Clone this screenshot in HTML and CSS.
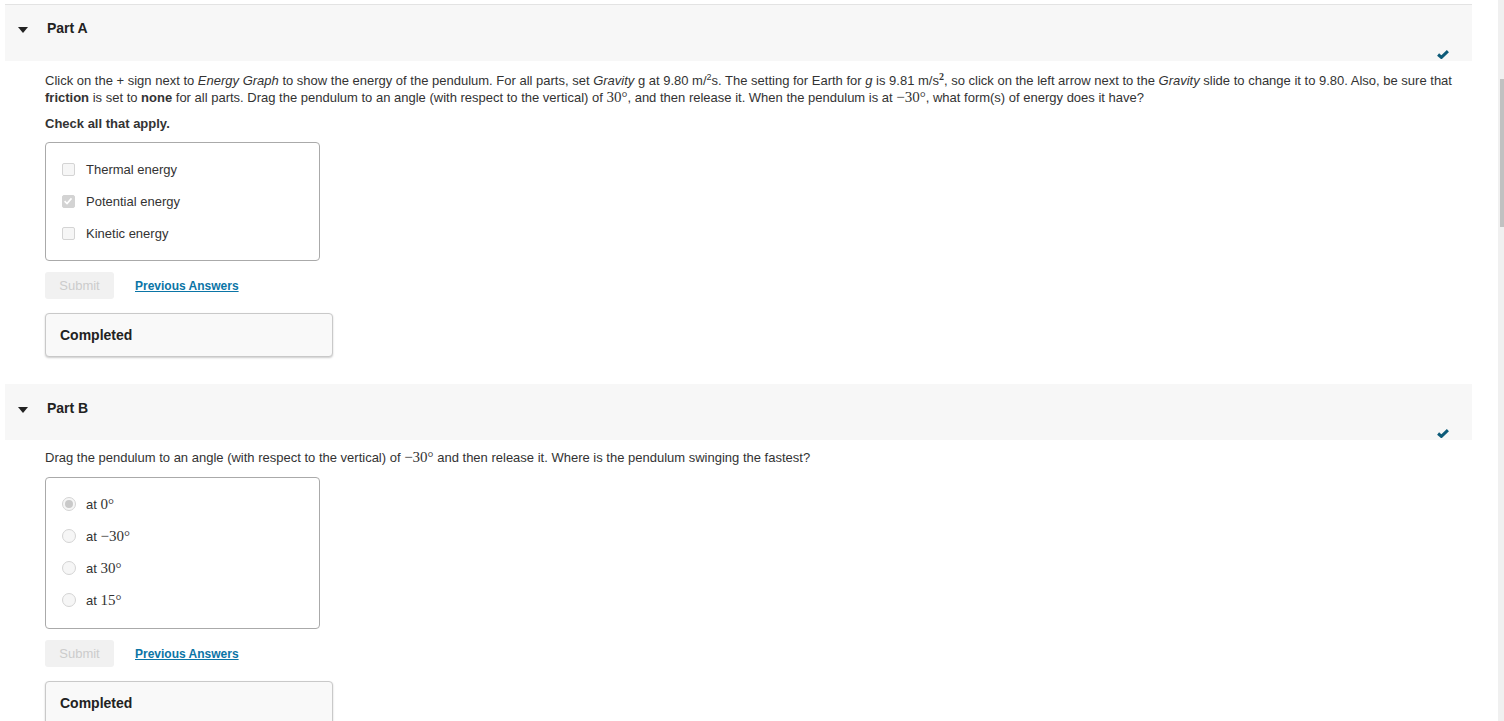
FILE: index.html
```html
<!DOCTYPE html>
<html>
<head>
<meta charset="utf-8">
<link rel="stylesheet" href="styles.css">
</head>
<body>
<div class="page">
  <section class="part">
    <div class="part-header">
      <span class="caret"></span>
      <span class="part-title">Part A</span>
      <svg class="done" width="12" height="9" viewBox="0 0 12 9"><path d="M1.1 4.5 L4.4 7.4 L10.9 1.1" fill="none" stroke="#0d5b79" stroke-width="3"/></svg>
    </div>
    <div class="part-body">
      <p class="prompt">Click on the + sign next to <i>Energy Graph</i> to show the energy of the pendulum. For all parts, set <i>Gravity</i> g at 9.80 m/<sup>2</sup>s. The setting for Earth for <i>g</i> is 9.81 m/s<sup class="msup">2</sup>, so click on the left arrow next to the <i>Gravity</i> slide to change it to 9.80. Also, be sure that <b>friction</b> is set to <b>none</b> for all parts. Drag the pendulum to an angle (with respect to the vertical) of <span class="math">30°</span>, and then release it. When the pendulum is at <span class="math">−30°</span>, what form(s) of energy does it have?</p>
      <p class="instr">Check all that apply.</p>
      <div class="choices">
        <div class="choice"><span class="cbox"></span><span>Thermal energy</span></div>
        <div class="choice"><span class="cbox checked"><svg width="12" height="12" viewBox="0 0 12 12"><path d="M2.6 6.2 L5 8.5 L9.5 3.4" fill="none" stroke="#fff" stroke-width="1.6"/></svg></span><span>Potential energy</span></div>
        <div class="choice"><span class="cbox"></span><span>Kinetic energy</span></div>
      </div>
      <div class="actions">
        <span class="submit">Submit</span>
        <a class="prev" href="#">Previous Answers</a>
      </div>
      <div class="status">Completed</div>
    </div>
  </section>

  <section class="part">
    <div class="part-header">
      <span class="caret"></span>
      <span class="part-title">Part B</span>
      <svg class="done" width="12" height="9" viewBox="0 0 12 9"><path d="M1.1 4.5 L4.4 7.4 L10.9 1.1" fill="none" stroke="#0d5b79" stroke-width="3"/></svg>
    </div>
    <div class="part-body">
      <p class="prompt prompt-b">Drag the pendulum to an angle (with respect to the vertical) of <span class="math">−30°</span> and then release it. Where is the pendulum swinging the fastest?</p>
      <div class="choices choices-b">
        <div class="choice"><span class="radio selected"></span><span>at <span class="math">0°</span></span></div>
        <div class="choice"><span class="radio"></span><span>at <span class="math">−30°</span></span></div>
        <div class="choice"><span class="radio"></span><span>at <span class="math">30°</span></span></div>
        <div class="choice"><span class="radio"></span><span>at <span class="math">15°</span></span></div>
      </div>
      <div class="actions">
        <span class="submit">Submit</span>
        <a class="prev" href="#">Previous Answers</a>
      </div>
      <div class="status">Completed</div>
    </div>
  </section>
</div>
<div class="scrollbar"><div class="thumb"></div></div>
</body>
</html>
```
FILE: styles.css
```css
html, body {
  margin: 0;
  padding: 0;
  height: 100%;
  overflow: hidden;
  background: #fff;
}
body {
  font-family: "Liberation Sans", Arial, sans-serif;
  font-size: 13px;
  color: #333;
}
.page {
  padding: 4px 0 0 5px;
  width: 1467px;
}
.part + .part {
  margin-top: 27px;
}
.part-header {
  display: flex;
  align-items: flex-start;
  height: 57px;
  background: #f7f7f7;
  border-top: 1px solid #e3e3e3;
  box-sizing: border-box;
}
.part + .part .part-header {
  border-top-color: #f7f7f7;
  height: 56px;
}
.caret {
  width: 0;
  height: 0;
  border-left: 5px solid transparent;
  border-right: 5px solid transparent;
  border-top: 6px solid #222;
  margin: 22px 0 0 13px;
}
.part-title {
  font-weight: bold;
  font-size: 14px;
  color: #222;
  margin: 15px 0 0 19px;
  line-height: 16px;
}
.done {
  margin-left: auto;
  margin-right: 23px;
  align-self: flex-end;
  margin-bottom: 2px;
}
.part-body {
  padding: 0 0 0 40px;
}
.prompt {
  margin: 12px 0 0;
  line-height: 16px;
  color: #333;
  padding-right: 6px;
}
.prompt-b {
  margin-top: 9px;
}
.prompt sup {
  font-size: 9px;
  line-height: 0;
  vertical-align: 5px;
}
.prompt sup.msup {
  font-size: 10px;
  font-weight: bold;
  font-family: "Liberation Serif", serif;
}
.math {
  font-family: "Liberation Serif", "Times New Roman", serif;
  font-size: 15px;
}
.instr {
  margin: 10px 0 0;
  font-weight: bold;
  line-height: 16px;
  color: #333;
}
.choices {
  margin-top: 10px;
  width: 273px;
  border: 1px solid #aaa;
  border-radius: 4px;
  padding: 10px 0 11px;
}
.choices-b {
  margin-top: 11px;
  padding-bottom: 12px;
}
.choice {
  display: flex;
  align-items: center;
  height: 32px;
  padding-left: 16px;
  color: #333;
}
.cbox {
  width: 13px;
  height: 13px;
  box-sizing: border-box;
  border: 1px solid #d4d4d4;
  border-radius: 2px;
  background: #f6f6f6;
  margin-right: 11px;
  display: flex;
}
.cbox.checked {
  background: #d3d3d3;
  border-color: #d3d3d3;
}
.cbox.checked svg {
  margin: -1px;
}
.radio {
  width: 14px;
  height: 14px;
  box-sizing: border-box;
  border: 1px solid #d4d4d4;
  border-radius: 50%;
  background: #f6f6f6;
  margin-right: 10px;
  display: flex;
  align-items: center;
  justify-content: center;
}
.radio.selected::after {
  content: "";
  width: 8px;
  height: 8px;
  border-radius: 50%;
  background: #c9c9c9;
}
.actions {
  display: flex;
  align-items: center;
  margin-top: 11px;
}
.submit {
  width: 69px;
  height: 27px;
  line-height: 27px;
  text-align: center;
  background: #f1f1f1;
  color: #ccc;
  border-radius: 3px;
}
.prev {
  margin-left: 21px;
  font-size: 12px;
  font-weight: bold;
  color: #0b75a6;
  text-decoration: underline;
}
.status {
  margin-top: 14px;
  width: 288px;
  height: 44px;
  box-sizing: border-box;
  border: 1px solid #c9c9c9;
  border-radius: 4px;
  background: #f9f9f9;
  box-shadow: 0 1px 2px rgba(0,0,0,0.2);
  padding-left: 14px;
  display: flex;
  align-items: center;
  font-weight: bold;
  font-size: 14px;
  color: #222;
}
.scrollbar {
  position: fixed;
  top: 0;
  right: 0;
  width: 6px;
  height: 100%;
  background: #f0f0f0;
}
.thumb {
  position: absolute;
  left: 2px;
  right: 0;
  top: 79px;
  height: 148px;
  background: #c1c1c1;
}
```
